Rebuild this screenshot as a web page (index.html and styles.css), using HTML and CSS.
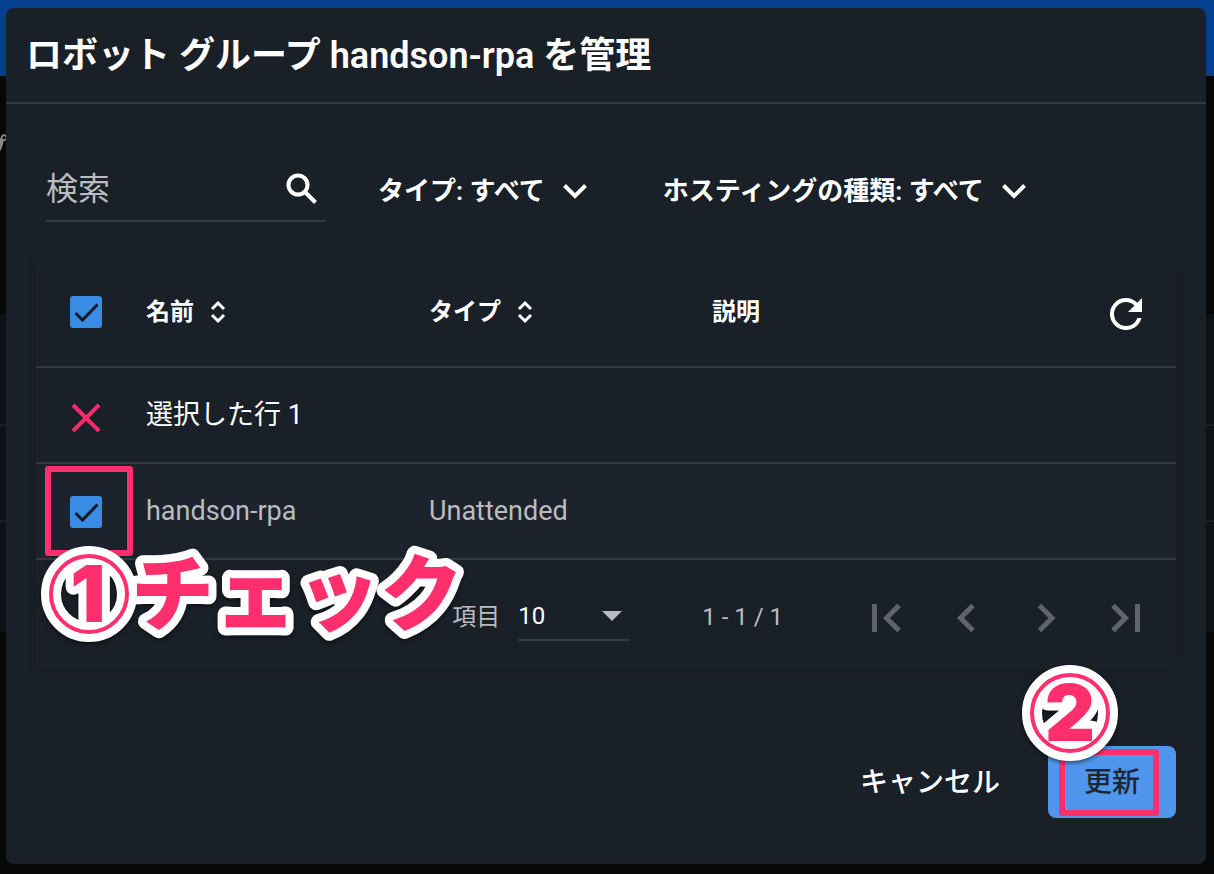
FILE: index.html
```html
<!DOCTYPE html>
<html lang="ja">
<head>
<meta charset="utf-8">
<meta name="viewport" content="width=device-width, initial-scale=1">
<title>ロボット グループ handson-rpa を管理</title>
<link rel="stylesheet" href="styles.css">
</head>
<body>
<div class="backdrop" aria-hidden="true">
  <div class="backdrop-bar"></div>
  <div class="backdrop-heading">プ</div>
  <div class="backdrop-panel"><div></div><div></div><div></div></div>
</div>
<main class="dialog">
  <header class="dialog-header"><h1>ロボット グループ handson-rpa を管理</h1></header>
  <div class="dialog-body">
    <div class="toolbar">
      <div class="search">
        <input type="search" aria-label="検索" placeholder="検索">
        <svg viewBox="0 0 32 32" width="32" height="32" aria-hidden="true"><circle cx="12" cy="12" r="9.5"/><path d="M19 19 29.500 29.500"/></svg>
      </div>
      <button class="filter" type="button">タイプ: すべて<svg viewBox="0 0 24 16" width="24" height="16" aria-hidden="true"><path d="m1.500 2.500 10.500 10.500L22.500 2.500"/></svg></button>
      <button class="filter" type="button">ホスティングの種類: すべて<svg viewBox="0 0 24 16" width="24" height="16" aria-hidden="true"><path d="m1.500 2.500 10.500 10.500L22.500 2.500"/></svg></button>
    </div>
    <section class="grid-card">
      <table class="grid">
        <colgroup><col class="col-check"><col class="col-data"><col class="col-data"><col><col class="col-action"></colgroup>
        <thead>
          <tr>
            <th><label class="check"><input type="checkbox" checked aria-label="すべて選択"><svg viewBox="0 0 32 32" aria-hidden="true"><path d="m5.500 17 7 7L27.500 8.500"/></svg></label></th>
            <th><button class="sort" type="button">名前<svg viewBox="0 0 16 24" width="16" height="24" aria-hidden="true"><path d="m2 9 6-6 6 6M2 15l6 6 6-6"/></svg></button></th>
            <th><button class="sort" type="button">タイプ<svg viewBox="0 0 16 24" width="16" height="24" aria-hidden="true"><path d="m2 9 6-6 6 6M2 15l6 6 6-6"/></svg></button></th>
            <th>説明</th>
            <th><button class="refresh" type="button" aria-label="更新"><svg viewBox="4 4 16 16" width="32" height="32" aria-hidden="true"><path d="M17.650 6.350A7.958 7.958 0 0 0 12 4a8 8 0 1 0 7.730 10h-2.080A5.990 5.990 0 0 1 12 18a6 6 0 1 1 0-12c1.660 0 3.140.69 4.220 1.780L13 11h7V4z"/></svg></button></th>
          </tr>
        </thead>
        <tbody>
          <tr class="selection">
            <td><button class="clear" type="button" aria-label="選択を解除"><svg viewBox="0 0 32 32" width="32" height="32" aria-hidden="true"><path d="m3 5 26 26M29 5 3 31"/></svg></button></td>
            <td colspan="4">選択した行 1</td>
          </tr>
          <tr class="selected">
            <td class="marked">
              <label class="check"><input type="checkbox" checked aria-label="handson-rpa"><svg viewBox="0 0 32 32" aria-hidden="true"><path d="m5.500 17 7 7L27.500 8.500"/></svg></label>
              <span class="frame frame-check"></span>
              <svg class="callout callout-check" viewBox="0 0 440 104" width="440" height="104">
                <circle class="halo" cx="48" cy="52" r="38"/>
                <text class="number" x="47" y="80">1</text>
                <text class="word" x="90" y="82">チェック</text>
                <circle class="ring" cx="48" cy="52" r="38"/>
              </svg>
            </td>
            <td>handson-rpa</td>
            <td>Unattended</td>
            <td></td>
            <td></td>
          </tr>
        </tbody>
      </table>
      <footer class="pager">
        <label for="page-size">項目</label>
        <div class="select"><select id="page-size"><option>10</option></select><svg viewBox="0 0 20 10" width="20" height="10" aria-hidden="true"><path d="M0 0h20L10 10z"/></svg></div>
        <span class="range">1 - 1 / 1</span>
        <nav class="pages" aria-label="ページ">
          <button type="button" disabled aria-label="最初のページ"><svg viewBox="0 0 32 28" width="32" height="28" aria-hidden="true"><path d="M4.500 0v28M29 1.500 16.500 14 29 26.500"/></svg></button>
          <button type="button" disabled aria-label="前のページ"><svg viewBox="0 0 32 28" width="32" height="28" aria-hidden="true"><path d="M23 1.500 10.500 14 23 26.500"/></svg></button>
          <button type="button" disabled aria-label="次のページ"><svg viewBox="0 0 32 28" width="32" height="28" aria-hidden="true"><path d="M9.500 1.500 22 14 9.500 26.500"/></svg></button>
          <button type="button" disabled aria-label="最後のページ"><svg viewBox="0 0 32 28" width="32" height="28" aria-hidden="true"><path d="M27.500 0v28M3 1.500 15.500 14 3 26.500"/></svg></button>
        </nav>
      </footer>
    </section>
    <div class="actions">
      <button class="cancel" type="button">キャンセル</button>
      <div class="marked">
        <button class="submit" type="button">更新</button>
        <span class="frame frame-submit"></span>
        <svg class="callout callout-submit" viewBox="0 0 96 104" width="96" height="104">
          <circle class="halo" cx="48" cy="52" r="38"/>
          <text class="number" x="48" y="80">2</text>
          <circle class="ring" cx="48" cy="52" r="38"/>
        </svg>
      </div>
    </div>
  </div>
</main>
</body>
</html>
```
FILE: styles.css
```css
*, *::before, *::after { box-sizing: border-box; }

:root {
  --surface: #1a2028;
  --line: #343a43;
  --muted: #babcbf;
  --blue: #398be3;
  --pink: #ff2e6d;
}

body {
  margin: 0;
  min-height: 100vh;
  padding: 8px 8px 10px 6px;
  background: #060709;
  color: #fff;
  font-family: Roboto, "Noto Sans CJK JP", sans-serif;
  font-size: 28px;
  line-height: 40px;
}

button, input, select { font: inherit; color: inherit; }

button {
  padding: 0;
  border: 0;
  background: none;
}

svg {
  display: block;
  flex: none;
  fill: none;
  stroke: currentColor;
}

/* Dimmed page behind the dialog */
.backdrop {
  position: fixed;
  inset: 0;
  z-index: -1;
}

.backdrop-bar { height: 76px; background: #05408f; }

.backdrop-heading {
  height: 238px;
  padding-top: 54px;
  margin-left: -20px;
  color: #8a8a8a;
  font-size: 28px;
  font-weight: 600;
}

.backdrop-panel { background: #0d1216; }
.backdrop-panel div { height: 96px; border-bottom: 2px solid #1c1e22; }
.backdrop-panel div:first-child { height: 112px; }
.backdrop-panel div:last-child { height: 110px; border: 0; }

/* Dialog */
.dialog {
  min-height: calc(100vh - 18px);
  border-radius: 8px;
  background: var(--surface);
}

.dialog-header {
  padding: 20px 20px 18px;
  border-bottom: 2px solid var(--line);
}

h1 {
  margin: 0;
  font-size: 36px;
  line-height: 56px;
  font-weight: 600;
}

.dialog-body { padding: 48px 30px 46px; }

/* Search and filters */
.toolbar {
  display: flex;
  align-items: center;
  height: 70px;
  padding-left: 10px;
  margin-bottom: 34px;
}

.search {
  display: flex;
  align-items: center;
  width: 280px;
  height: 70px;
  padding: 6px 8px 0 0;
  margin-right: 52px;
  border-bottom: 2px solid var(--line);
  stroke-width: 4;
}

.search input {
  flex: 1;
  min-width: 0;
  padding: 0;
  border: 0;
  outline: 0;
  background: none;
  font-size: 32px;
  line-height: 48px;
}

.search input::placeholder { color: var(--muted); opacity: 1; }

.filter {
  display: flex;
  align-items: center;
  gap: 18px;
  padding-top: 7px;
  margin-right: 76px;
  font-size: 26px;
  font-weight: 600;
  white-space: nowrap;
  stroke-width: 4;
}

/* Grid */
.grid-card {
  border-radius: 8px;
  box-shadow: 0 2px 8px rgba(0, 0, 0, 0.15);
}

.grid {
  width: 100%;
  table-layout: fixed;
  border-collapse: separate;
  border-spacing: 0;
}

.col-check { width: 110px; }
.col-data { width: 283px; }
.col-action { width: 66px; }

.grid th, .grid td {
  height: 96px;
  padding: 0;
  border-bottom: 2px solid var(--line);
  font-size: 27px;
  text-align: left;
}

.grid th { height: 112px; padding-top: 2px; font-size: 24px; font-weight: 600; }
.grid th:first-child, .grid td:first-child { padding-left: 34px; }
.grid td:first-child { padding-top: 2px; }
.selected { background: #1d232d; color: var(--muted); }

.sort { display: flex; align-items: center; gap: 16px; stroke-width: 3; }
.refresh { display: block; padding-top: 4px; }
.refresh svg { fill: currentColor; stroke: none; }
.clear { display: block; color: #fa2a6d; stroke-width: 4; }

.check { display: grid; width: 32px; height: 32px; }
.check > * { grid-area: 1 / 1; width: 32px; height: 32px; }
.check input {
  margin: 0;
  appearance: none;
  border-radius: 3px;
  background: var(--blue);
}
.check svg { color: #121a26; stroke-width: 3; pointer-events: none; }

/* Pager */
.pager {
  display: flex;
  align-items: center;
  justify-content: flex-end;
  height: 110px;
  padding: 4px 10px 0 0;
  color: var(--muted);
  font-size: 24px;
}

.select {
  display: flex;
  align-items: center;
  width: 112px;
  height: 48px;
  padding-right: 8px;
  margin: 0 72px 0 18px;
  border-bottom: 2px solid var(--line);
}

.select select {
  flex: 1;
  min-width: 0;
  padding: 0;
  border: 0;
  appearance: none;
  background: none;
  color: #fff;
}

.select svg { fill: currentColor; stroke: none; }
.range { margin-right: 63px; }
.pages { display: flex; padding-top: 2px; }

.pages button {
  display: grid;
  place-items: center;
  width: 80px;
  height: 48px;
  color: #5f636b;
  stroke-width: 5;
}

/* Actions */
.actions {
  display: flex;
  justify-content: flex-end;
  gap: 48px;
  margin-top: 76px;
}

.cancel, .submit { height: 72px; padding-top: 2px; font-weight: 500; }

.submit {
  width: 128px;
  border-radius: 8px;
  background: #5096ed;
  color: #1e2834;
}

/* Tutorial marks over the dialog */
.marked { position: relative; }

.frame {
  position: absolute;
  border: 6px solid var(--pink);
  border-radius: 3px;
  pointer-events: none;
}

.frame-check { left: 9px; top: 2px; width: 88px; height: 90px; }
.frame-submit { left: 11px; top: 3px; width: 100px; height: 67px; }

.callout {
  position: absolute;
  z-index: 1;
  overflow: visible;
  filter: drop-shadow(0 2px 2px rgba(0, 0, 0, 0.5));
  pointer-events: none;
}

.callout-check { left: 5px; top: 78px; }
.callout-submit { left: -26px; top: -85px; }

.halo { stroke: #fff; stroke-width: 20; }
.ring { stroke: var(--pink); stroke-width: 4; }

.number, .word {
  fill: var(--pink);
  stroke: #fff;
  stroke-width: 16;
  stroke-linejoin: round;
  paint-order: stroke;
  font-weight: 900;
}

.number {
  font-family: Inter, sans-serif;
  font-size: 78px;
  text-anchor: middle;
}

.word { font-family: "Noto Sans CJK JP", sans-serif; font-size: 83px; }
```
